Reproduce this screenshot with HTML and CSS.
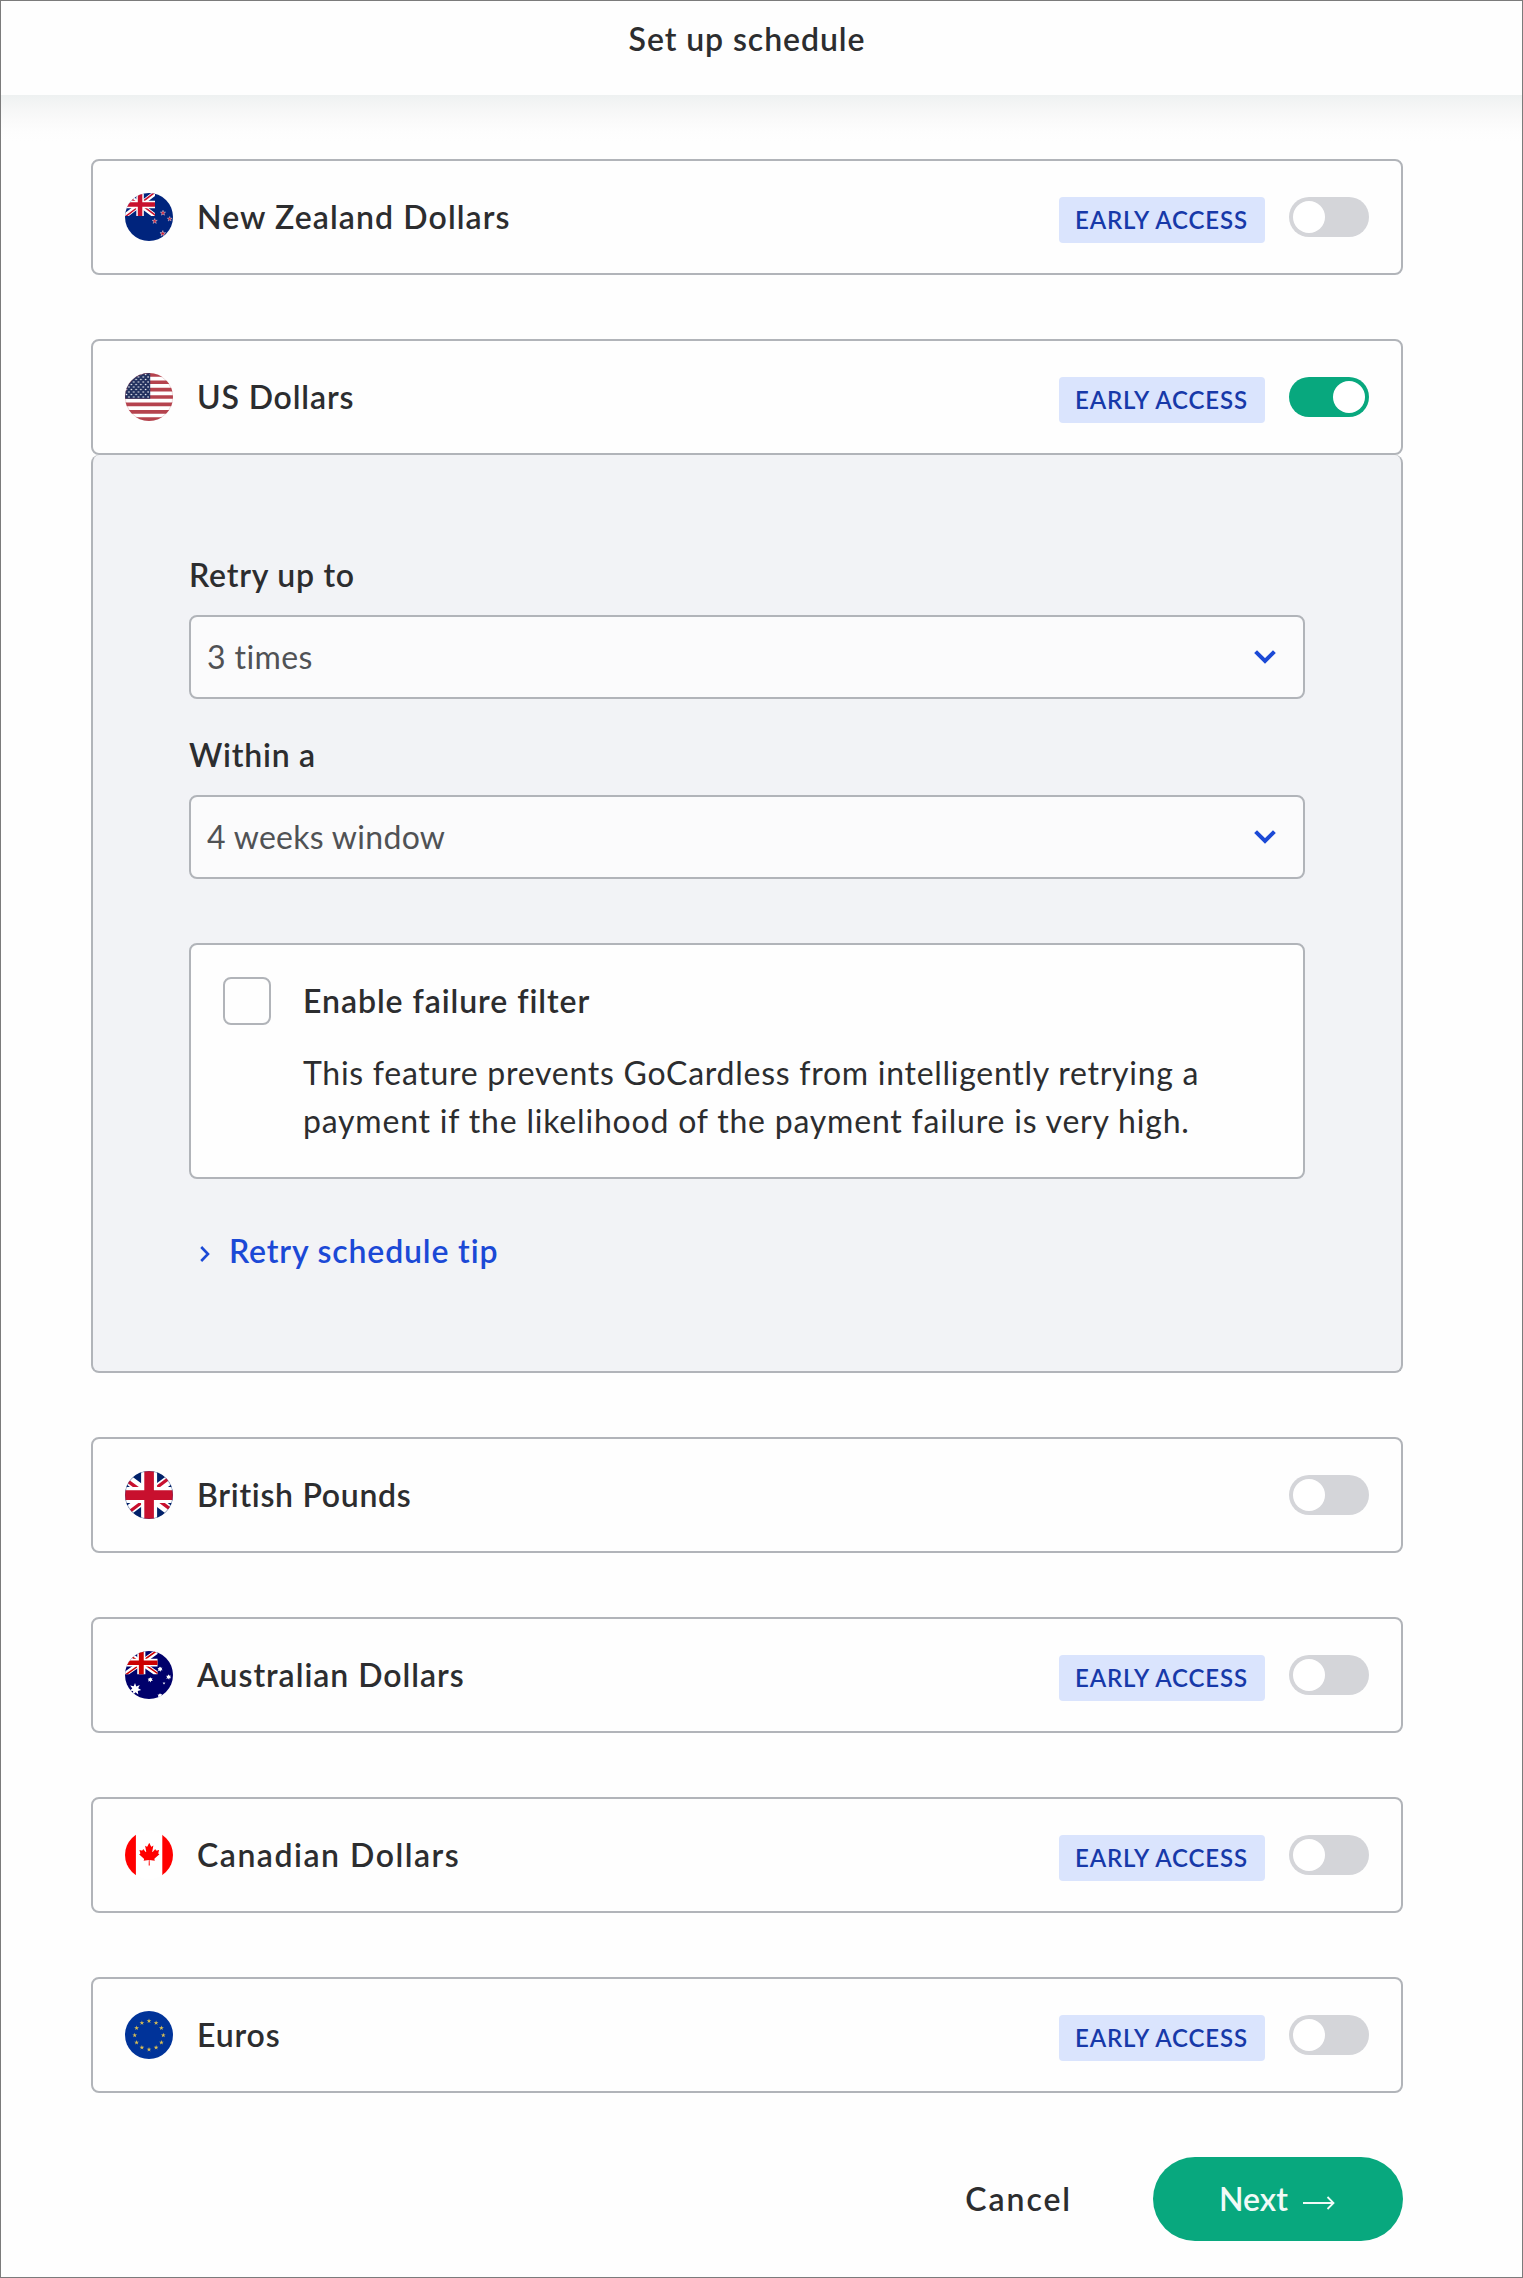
FILE: index.html
```html
<!DOCTYPE html>
<html lang="en">
<head>
<meta charset="utf-8">
<title>Set up schedule</title>
<link rel="stylesheet" href="styles.css">
</head>
<body>
<svg class="defs" width="0" height="0" aria-hidden="true">
  <defs>
    <clipPath id="round"><circle cx="24" cy="24" r="24"/></clipPath>
    <path id="star" d="M0-1 .225-.309.951-.309.363.118.588.809 0 .382-.588.809-.363.118-.951-.309-.225-.309z"/>
    <g id="union">
      <path fill="#fff" d="M75 0l244 181L562 0h78v62L400 241l240 178v61h-80L320 301 81 480H0v-60l239-178L0 64V0z"/>
      <path class="red" d="M424 281l216 159v40L369 281zm-184 20l6 35L54 480H0zM640 0v3L391 191l2-44L590 0zM0 0l239 176h-60L0 42z"/>
      <path fill="#fff" d="M241 0v480h160V0zM0 160v160h640V160z"/>
      <path class="red" d="M0 193v96h640v-96zM273 0v480h96V0z"/>
    </g>
    <pattern id="us-stars" width="4.8" height="5" patternUnits="userSpaceOnUse">
      <circle cx="1.5" cy="1.5" r=".8" fill="#fff"/><circle cx="3.9" cy="4" r=".8" fill="#fff"/>
    </pattern>
  </defs>
</svg>
<div class="page">
  <header class="header"><h1 class="title">Set up schedule</h1></header>
  <main class="content">
    <section class="row">
      <svg class="flag" viewBox="0 0 48 48"><g clip-path="url(#round)">
        <path fill="#00247d" d="M0 0h48v48H0z"/>
        <use href="#union" class="union" transform="scale(.0469 .0479)"/>
        <g class="nz-stars">
          <use href="#star" transform="translate(38 20) scale(2.7)"/>
          <use href="#star" transform="translate(44.7 26) scale(2.5)"/>
          <use href="#star" transform="translate(29.7 28.2) scale(2.7)"/>
          <use href="#star" transform="translate(37.8 40.6) scale(3)"/>
        </g></g></svg>
      <span class="name name-nz">New Zealand Dollars</span>
      <span class="badge">EARLY ACCESS</span>
      <span class="toggle"></span>
    </section>

    <div class="group">
      <section class="row">
        <svg class="flag" viewBox="0 0 48 48"><g clip-path="url(#round)">
          <path fill="#fff" d="M0 0h48v48H0z"/>
          <path stroke="#b5434e" stroke-width="3.69" d="M0 1.85h48M0 9.23h48M0 16.6h48M0 24h48M0 31.4h48M0 38.8h48M0 46.15h48"/>
          <path fill="#22315f" d="M0 0h25.2v25.8H0z"/>
          <path fill="url(#us-stars)" d="M0 0h25v25H0z"/></g>
          <circle cx="24" cy="24" r="23.7" fill="none" stroke="#b5434e" stroke-opacity=".35" stroke-width=".6"/></svg>
        <span class="name name-us">US Dollars</span>
        <span class="badge">EARLY ACCESS</span>
        <span class="toggle on"></span>
      </section>
      <div class="panel">
        <div class="field">
          <span class="label">Retry up to</span>
          <div class="select"><span class="value value-times">3 times</span>
            <svg class="caret" viewBox="0 0 22 14"><path d="M1.6 1.6L11 11l9.4-9.4"/></svg></div>
        </div>
        <div class="field">
          <span class="label">Within a</span>
          <div class="select"><span class="value">4 weeks window</span>
            <svg class="caret" viewBox="0 0 22 14"><path d="M1.6 1.6L11 11l9.4-9.4"/></svg></div>
        </div>
        <div class="filter">
          <span class="checkbox"></span>
          <div class="filter-text">
            <span class="filter-title">Enable failure filter</span>
            <p class="filter-body"><span class="line-a">This feature prevents GoCardless from intelligently retrying a</span><br><span class="line-b">payment if the likelihood of the payment failure is very high.</span></p>
          </div>
        </div>
        <a class="tip"><svg class="tip-icon" viewBox="0 0 10 16"><path d="M1.2 1l6.8 7-6.8 7"/></svg>Retry schedule tip</a>
      </div>
    </div>

    <section class="row">
      <svg class="flag" viewBox="0 0 48 48"><g clip-path="url(#round)">
        <path fill="#012169" d="M0 0h48v48H0z"/>
        <use href="#union" class="union" transform="translate(-8) scale(.1)"/></g>
        <circle cx="24" cy="24" r="23.7" fill="none" stroke="#012169" stroke-opacity=".4" stroke-width=".6"/></svg>
      <span class="name name-gb">British Pounds</span>
      <span class="toggle"></span>
    </section>

    <section class="row">
      <svg class="flag" viewBox="0 0 48 48"><g clip-path="url(#round)">
        <path fill="#00006b" d="M0 0h48v48H0z"/>
        <use href="#union" class="union union-au" transform="scale(.0508 .0486)"/>
        <g fill="#fff">
          <path d="M10 32l1.3 3.5 3.4-1.5-1.5 3.3 3 1.8-3.4 1 .5 3.4-2.8-2.2-2.5 2.4.1-3.6-3.5-.4 2.7-2.3-2.1-2.9 3.5.8z"/>
          <g id="au-star"><circle cx="35" cy="17.8" r="1.5"/><path d="M35 15.4l.7 1.6 1.7-.5-.9 1.5 1.2 1.3-1.8-.1-.4 1.6-1-1.4-1.9.5 1-1.6-1.1-1.4 1.8.2z"/></g>
          <use href="#au-star" x="8.6" y="7.9"/>
          <use href="#au-star" x="-9.8" y="10.6"/>
          <use href="#au-star" y="26.6"/>
          <use href="#star" transform="translate(39 32.3) scale(1.5)"/>
        </g></g></svg>
      <span class="name name-au">Australian Dollars</span>
      <span class="badge">EARLY ACCESS</span>
      <span class="toggle"></span>
    </section>

    <section class="row">
      <svg class="flag" viewBox="0 0 48 48"><g clip-path="url(#round)">
        <path fill="#fff" d="M0 0h48v48H0z"/>
        <path fill="#f00" d="M0 0h10.9v48H0zM37.3 0H48v48H37.3z"/>
        <path fill="#f00" transform="translate(-1 3.9) scale(.08 .082)" d="M201 232l-13.3 4.4 61.4 54c4.7 13.7-1.6 17.8-5.6 25l66.6-8.4-1.6 67 13.9-.3-3.1-66.6 66.7 8c-4.1-8.7-7.8-13.3-4-27.2l61.3-51-10.7-4c-8.8-6.8 3.8-32.6 5.6-48.9 0 0-35.7 12.3-38 5.8l-9.2-17.5-32.6 35.8c-3.5.9-5-.5-5.9-3.5l15-74.8-23.8 13.4c-2 .9-4 .1-5.2-2.2l-23-46-23.6 47.8c-1.8 1.7-3.6 1.9-5 .7L264 130.8l13.7 74.1c-1.1 3-3.7 3.8-6.7 2.2l-31.2-35.3c-4 6.5-6.8 17.1-12.2 19.5-5.4 2.3-23.5-4.5-35.6-7 4.2 14.8 17 39.6 9 47.7z"/></g></svg>
      <span class="name name-ca">Canadian Dollars</span>
      <span class="badge">EARLY ACCESS</span>
      <span class="toggle"></span>
    </section>

    <section class="row">
      <svg class="flag" viewBox="0 0 48 48"><circle cx="24" cy="24" r="24" fill="#039"/>
        <g fill="#dcc052">
          <use href="#star" transform="translate(24 10) scale(2.5)"/>
          <use href="#star" transform="translate(31.1 11.9) scale(2.5)"/>
          <use href="#star" transform="translate(36.4 17.1) scale(2.5)"/>
          <use href="#star" transform="translate(38.3 24.3) scale(2.5)"/>
          <use href="#star" transform="translate(36.4 31.5) scale(2.5)"/>
          <use href="#star" transform="translate(31.1 36.6) scale(2.5)"/>
          <use href="#star" transform="translate(24 38.5) scale(2.5)"/>
          <use href="#star" transform="translate(16.9 36.6) scale(2.5)"/>
          <use href="#star" transform="translate(11.6 31.5) scale(2.5)"/>
          <use href="#star" transform="translate(9.7 24.3) scale(2.5)"/>
          <use href="#star" transform="translate(11.6 17.1) scale(2.5)"/>
          <use href="#star" transform="translate(16.9 11.9) scale(2.5)"/>
        </g></svg>
      <span class="name name-eu">Euros</span>
      <span class="badge">EARLY ACCESS</span>
      <span class="toggle"></span>
    </section>

    <footer class="actions">
      <a class="cancel">Cancel</a>
      <a class="next">Next<svg class="arrow" viewBox="0 0 32 14"><path d="M0 7h30.5M24.5 1l6 6-6 6"/></svg></a>
    </footer>
  </main>
</div>
</body>
</html>
```
FILE: styles.css
```css
* { box-sizing: border-box; }
body {
  margin: 0;
  background: #fefefe;
  color: #2c2d2f;
  font: 400 32px/48px Lato, "Open Sans", sans-serif;
}
.defs { display: block; }
.page {
  height: 2278px;
  border: 1px solid #7b7b7b;
}
.header {
  height: 94px;
  padding: 14px 119px 0 90px;
  text-align: center;
  background: #fefefe;
}
.title { margin: 0; font-size: 32px; font-weight: 600; letter-spacing: .93px; }
.content {
  display: flex;
  flex-direction: column;
  gap: 64px;
  padding: 64px 119px 0 90px;
  background: linear-gradient(#eef1f1 0, #f5f6f6 12px, #fafafa 25px, #fdfdfd 36px, #fefefe 46px) no-repeat;
}
.row {
  display: flex;
  align-items: center;
  height: 116px;
  padding: 0 32px;
  background: #fefefe;
  border: 2px solid #b1b4b9;
  border-radius: 8px;
}
.flag { width: 48px; height: 48px; margin-right: 24px; overflow: hidden; }
.red { fill: currentColor; }
.union { color: #c8102e; }
.union-au { color: #cc0000; }
.nz-stars { fill: #cc142b; stroke: #fff; stroke-width: .15; }
.name { flex: 1; font-weight: 600; letter-spacing: .85px; }
.name-nz { letter-spacing: 1.1px; }
.name-gb { letter-spacing: .7px; }
.name-au { letter-spacing: .97px; }
.name-ca { letter-spacing: 1.52px; }
.badge {
  width: 206px;
  height: 46px;
  margin: 6px 24px 0 0;
  padding-left: 16px;
  border-radius: 4px;
  background: #dae4fd;
  color: #1739a9;
  font-size: 24px;
  font-weight: 600;
  line-height: 46px;
  letter-spacing: .85px;
  white-space: nowrap;
}
.toggle {
  display: flex;
  width: 80px;
  height: 40px;
  padding: 4px;
  border-radius: 20px;
  background: #d4d5d9;
}
.toggle::before { content: ""; width: 32px; height: 32px; border-radius: 50%; background: #fff; }
.toggle.on { justify-content: flex-end; background: #08a87e; }
.panel {
  display: flex;
  flex-direction: column;
  gap: 32px;
  height: 918px;
  padding: 96px 96px 0;
  background: #f2f3f6;
  border: 2px solid #b1b4b9;
  border-top: 0;
  border-radius: 8px;
}
.field { display: flex; flex-direction: column; gap: 16px; }
.label { font-weight: 600; letter-spacing: .78px; }
.select {
  display: flex;
  align-items: center;
  justify-content: space-between;
  height: 84px;
  padding: 0 27px 0 16px;
  background: #fbfbfc;
  border: 2px solid #b1b4b9;
  border-radius: 8px;
  color: #505255;
}
.value { letter-spacing: .3px; }
.value-times { letter-spacing: .39px; }
.caret { width: 22px; height: 14px; fill: none; stroke: #1b49d6; stroke-width: 4; }
.filter {
  display: flex;
  gap: 32px;
  height: 236px;
  margin-top: 32px;
  padding: 32px;
  background: #fefefe;
  border: 2px solid #b1b4b9;
  border-radius: 8px;
}
.checkbox { width: 48px; height: 48px; border: 2px solid #b1b4b9; border-radius: 8px; }
.filter-text { display: flex; flex-direction: column; gap: 24px; white-space: nowrap; }
.filter-title { font-weight: 600; letter-spacing: .94px; }
.filter-body { margin: 0; }
.line-a { letter-spacing: .73px; }
.line-b { letter-spacing: .8px; }
.tip {
  display: flex;
  align-items: center;
  margin-top: 16px;
  padding-left: 11px;
  color: #1b49d6;
  font-weight: 600;
  letter-spacing: .84px;
}
.tip-icon { width: 10px; height: 16px; margin: 6px 19px 0 0; fill: none; stroke: #1b49d6; stroke-width: 2.6; }
.actions { display: flex; align-items: center; justify-content: flex-end; font-weight: 600; }
.cancel { margin-right: 81px; letter-spacing: 1.93px; }
.next {
  display: flex;
  align-items: center;
  width: 250px;
  height: 84px;
  padding-left: 66px;
  border-radius: 42px;
  background: #08a87e;
  color: #f1faf7;
}
.arrow { width: 32px; height: 14px; margin: 7px 0 0 15px; fill: none; stroke: #f1faf7; stroke-width: 1.8; }
```
